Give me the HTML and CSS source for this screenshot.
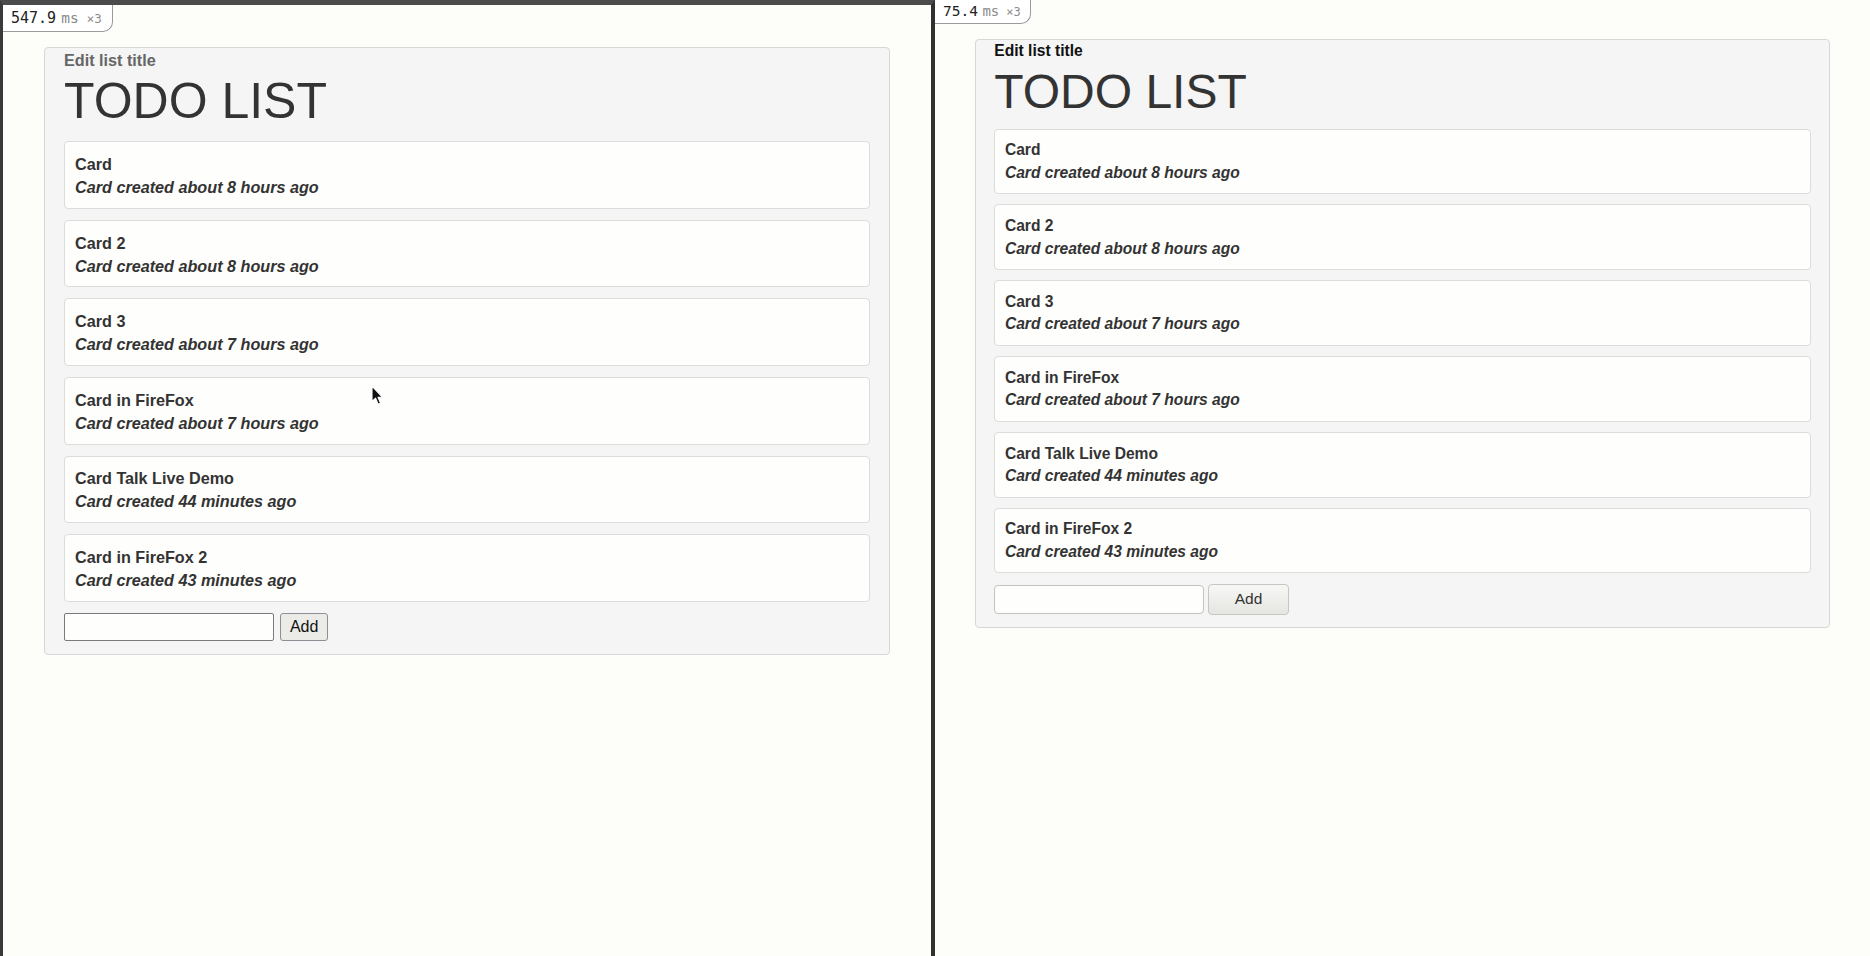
FILE: index.html
```html
<!DOCTYPE html>
<html lang="en">
<head>
<meta charset="utf-8">
<title>TODO LIST</title>
<link rel="stylesheet" href="styles.css">
</head>
<body>
<div class="frame">
  <section class="pane pane-ff">
    <div class="badge badge-ff"><span class="b-num">547.9</span><span class="b-unit">ms</span><span class="b-mult">×3</span></div>
    <div class="panel">
      <div class="label">Edit list title</div>
      <h1 class="title">TODO LIST</h1>
      <ul class="cards">
        <li class="card"><div class="card-title">Card</div><div class="card-meta">Card created about 8 hours ago</div></li>
        <li class="card"><div class="card-title">Card 2</div><div class="card-meta">Card created about 8 hours ago</div></li>
        <li class="card"><div class="card-title">Card 3</div><div class="card-meta">Card created about 7 hours ago</div></li>
        <li class="card"><div class="card-title">Card in FireFox</div><div class="card-meta">Card created about 7 hours ago</div></li>
        <li class="card"><div class="card-title">Card Talk Live Demo</div><div class="card-meta">Card created 44 minutes ago</div></li>
        <li class="card"><div class="card-title">Card in FireFox 2</div><div class="card-meta">Card created 43 minutes ago</div></li>
      </ul>
      <form class="add-form">
        <input class="add-input" type="text">
        <button class="add-btn" type="button">Add</button>
      </form>
    </div>
    <svg class="cursor" width="13" height="21" viewBox="0 0 13 21"><path d="M1 1 L1 16.5 L4.6 13.2 L7.2 19.2 L9.6 18.2 L7 12.3 L11.6 12.3 Z" fill="#111" stroke="#fff" stroke-width="1.1" stroke-linejoin="round"/></svg>
  </section>
  <section class="pane pane-cr">
    <div class="badge badge-cr"><span class="b-num">75.4</span><span class="b-unit">ms</span><span class="b-mult">×3</span></div>
    <div class="panel">
      <div class="label">Edit list title</div>
      <h1 class="title">TODO LIST</h1>
      <ul class="cards">
        <li class="card"><div class="card-title">Card</div><div class="card-meta">Card created about 8 hours ago</div></li>
        <li class="card"><div class="card-title">Card 2</div><div class="card-meta">Card created about 8 hours ago</div></li>
        <li class="card"><div class="card-title">Card 3</div><div class="card-meta">Card created about 7 hours ago</div></li>
        <li class="card"><div class="card-title">Card in FireFox</div><div class="card-meta">Card created about 7 hours ago</div></li>
        <li class="card"><div class="card-title">Card Talk Live Demo</div><div class="card-meta">Card created 44 minutes ago</div></li>
        <li class="card"><div class="card-title">Card in FireFox 2</div><div class="card-meta">Card created 43 minutes ago</div></li>
      </ul>
      <form class="add-form">
        <input class="add-input" type="text">
        <button class="add-btn" type="button">Add</button>
      </form>
    </div>
  </section>
</div>
</body>
</html>
```

FILE: styles.css
```css
* { box-sizing: border-box; }

html, body {
  margin: 0;
  padding: 0;
  background: #fdfdfa;
}

body {
  font-family: "Liberation Sans", Arial, sans-serif;
  color: #333;
  overflow: hidden;
}

.frame {
  display: flex;
  width: 1870px;
  height: 956px;
}

.pane {
  position: relative;
  width: 935px;
  height: 956px;
  flex: none;
  background: #fdfdfa;
}

.pane-ff {
  border-left: 3px solid #3a3a3a;
  border-top: 5px solid #4b4b4b;
  border-right: 4px solid #303232;
}

/* timing badges */
.badge {
  position: absolute;
  top: 0;
  left: 0;
  background: #fff;
  border-right: 1px solid #9a9a9a;
  border-bottom: 1px solid #9a9a9a;
  font-family: "DejaVu Sans Mono", monospace;
  white-space: nowrap;
}

.b-num { color: #222; }
.b-unit { color: #8a8a8a; }
.b-mult { color: #8a8a8a; }

.badge-ff {
  width: 110px;
  height: 27.3px;
  padding-left: 8px;
  border-bottom-right-radius: 10px;
  font-size: 15px;
  line-height: 27px;
}
.badge-ff .b-unit { font-size: 14.5px; margin-left: 5px; }
.badge-ff .b-mult { font-size: 12.5px; margin-left: 8px; }

.badge-cr {
  width: 96px;
  height: 24.3px;
  padding-left: 8px;
  border-bottom-right-radius: 10px;
  font-size: 14.5px;
  line-height: 22px;
}
.badge-cr .b-unit { font-size: 14px; margin-left: 4.5px; }
.badge-cr .b-mult { font-size: 12px; margin-left: 7px; }

/* list panel */
.panel {
  background: #f4f5f4;
  border: 1px solid #d6d7d6;
  border-radius: 4px;
}

.label { margin: 0; font-weight: 700; }

.title {
  margin: 0;
  font-weight: 400;
  color: #333;
}

.cards {
  list-style: none;
  margin: 0;
  padding: 0;
  display: flex;
  flex-direction: column;
}

.card {
  background: #fefefc;
  border: 1px solid #dcdcdb;
  border-radius: 4px;
}

.card-title { font-weight: 700; }
.card-meta { font-weight: 700; font-style: italic; }

.add-form {
  display: flex;
  align-items: center;
  margin: 0;
}

.add-input {
  margin: 0;
  background: #fefefc;
}

.add-btn {
  margin: 0;
  padding: 0;
  font-family: "Liberation Sans", Arial, sans-serif;
}

/* left (Firefox-like) pane */
.pane-ff .panel {
  width: 846px;
  margin: 42px 0 0 41px;
  padding: 2.1px 19px 12.7px;
}
.pane-ff .label {
  font-size: 16.2px;
  line-height: 20px;
  color: #666;
}
.pane-ff .title {
  font-size: 50px;
  line-height: 55px;
  margin: 4.4px 0 11.8px;
}
.pane-ff .cards { gap: 11px; }
.pane-ff .card {
  padding: 10.7px 10px 8.9px;
  font-size: 16.2px;
  line-height: 23px;
}
.pane-ff .add-form {
  margin-top: 11.2px;
  gap: 5.6px;
}
.pane-ff .add-input {
  width: 210.4px;
  height: 28px;
  border: 1px solid #7a7a7a;
  border-radius: 2px;
}
.pane-ff .add-btn {
  width: 48.4px;
  height: 28px;
  font-size: 16px;
  color: #111;
  background: #ebebe8;
  border: 1px solid #8e8e96;
  border-radius: 3px;
}

.cursor {
  position: absolute;
  left: 368px;
  top: 380px;
}

/* right (Chrome-like) pane */
.pane-cr .panel {
  width: 855px;
  margin: 39px 0 0 40px;
  padding: 0.6px 18.3px 11.8px;
}
.pane-cr .label {
  font-size: 15.6px;
  line-height: 19.3px;
  color: #111;
}
.pane-cr .title {
  font-size: 48px;
  line-height: 53px;
  margin: 5.3px 0 10.5px;
}
.pane-cr .cards { gap: 10.1px; }
.pane-cr .card {
  padding: 9.75px 9.6px 9.25px;
  font-size: 15.6px;
  line-height: 22.35px;
}
.pane-cr .add-form {
  margin-top: 10.3px;
  gap: 4.6px;
}
.pane-cr .add-input {
  width: 209.4px;
  height: 29.4px;
  border: 1px solid #c3c3c1;
  border-radius: 4px;
}
.pane-cr .add-btn {
  width: 80.4px;
  height: 31.4px;
  font-size: 15.5px;
  color: #333;
  background: linear-gradient(#f7f7f5, #e5e5e2);
  border: 1px solid #c6c6c3;
  border-radius: 4px;
}
```
